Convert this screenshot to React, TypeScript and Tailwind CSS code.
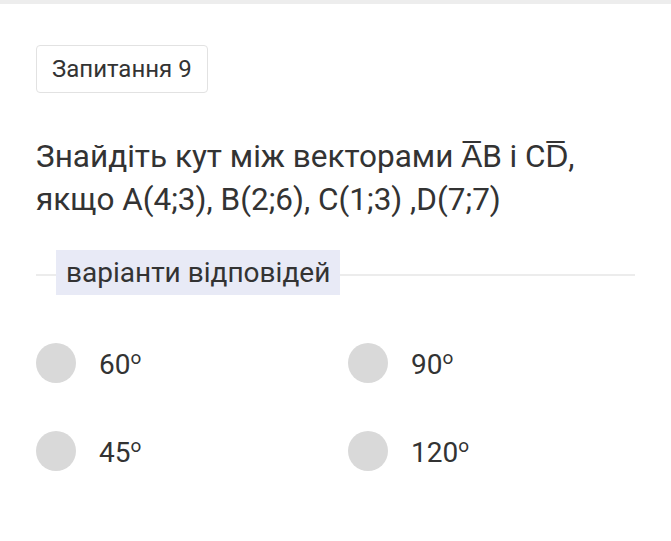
const options = [
  { id: 'a', value: '60' },
  { id: 'b', value: '90' },
  { id: 'c', value: '45' },
  { id: 'd', value: '120' },
]

export default function App() {
  return (
    <div className="w-[671px] h-[541px] bg-white text-[#333333] font-['Roboto','Liberation_Sans',sans-serif] flex flex-col">
      {/* top strip */}
      <div className="h-[4px] bg-[#ededed]" />

      <div className="px-[36px] pt-[41px] flex flex-col">
        {/* question badge */}
        <div className="self-start h-[48px] px-[15px] flex items-center border border-[#e2e2e2] rounded-[4px] text-[24px] leading-none text-[#333]">
          Запитання 9
        </div>

        {/* question */}
        <p className="mt-[42px] text-[31.5px] leading-[43px] text-[#333]">
          Знайдіть кут між векторами A&#x0305;B і CD&#x0305;,
          <br />
          якщо A(4;3), B(2;6), C(1;3) ,D(7;7)
        </p>

        {/* divider */}
        <div className="mt-[29px] flex items-start">
          <div className="mt-[24px] w-[20px] h-[2px] bg-[#ececec]" />
          <div className="h-[45px] px-[10px] flex items-center bg-[#e8eaf6] text-[28px] leading-none text-[#333]">
            варіанти відповідей
          </div>
          <div className="mt-[24px] flex-1 h-[2px] bg-[#ececec]" />
        </div>

        {/* answers */}
        <div className="mt-[48px] grid grid-cols-[312px_1fr] gap-y-[48px]">
          {options.map(o => (
            <div key={o.id} className="flex items-center h-[40px]">
              <div className="w-[40px] h-[40px] rounded-full bg-[#d9d9d9]" />
              <span className="ml-[23px] text-[28px] leading-none text-[#333]">
                {o.value}
                <span className="text-[19px] align-[10px]">o</span>
              </span>
            </div>
          ))}
        </div>
      </div>
    </div>
  )
}
